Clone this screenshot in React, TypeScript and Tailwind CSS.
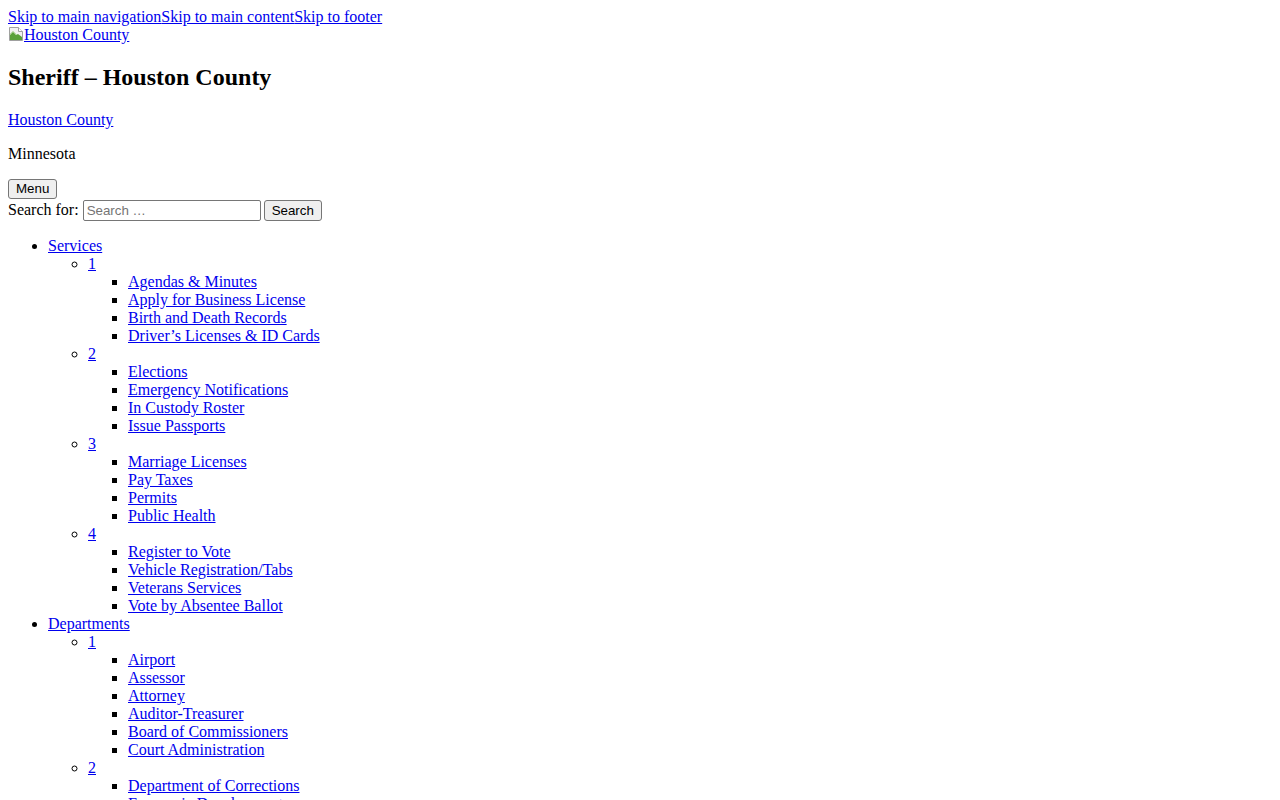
import React from 'react';

// Site header + mega-menu rendered with plain document styles (no theme loaded)
const services: string[][] = [
  ['Agendas & Minutes', 'Apply for Business License', 'Birth and Death Records', 'Driver’s Licenses & ID Cards'],
  ['Elections', 'Emergency Notifications', 'In Custody Roster', 'Issue Passports'],
  ['Marriage Licenses', 'Pay Taxes', 'Permits', 'Public Health'],
  ['Register to Vote', 'Vehicle Registration/Tabs', 'Veterans Services', 'Vote by Absentee Ballot'],
];

const departments: string[][] = [
  ['Airport', 'Assessor', 'Attorney', 'Auditor-Treasurer', 'Board of Commissioners', 'Court Administration'],
  ['Department of Corrections', 'Economic Development', 'Emergency Management', 'Environmental Services', 'Extension', 'Highway'],
  ['Human Resources', 'Human Services', 'Information Technology', 'Land Records', 'Planning & Zoning', 'Public Health'],
];

const link = 'text-[#0000ee] underline';

const BrokenImage = () => (
  <svg width="16" height="16" viewBox="0 0 16 16" className="inline-block align-[-2px]">
    <path d="M1.5 1.5h9l4 4v9h-13z" fill="#f2f2f2" stroke="#a0a0a0" />
    <path d="M10.5 1.5v4h4" fill="#ffffff" stroke="#a0a0a0" />
    <path d="M2 14V9l3-3 3 3 2-1 4 3v3z" fill="#5aa13a" />
    <path d="M2 8.5l3-3 3 3" fill="none" stroke="#8bc56a" />
  </svg>
);

const MenuSection = ({ title, groups }: { title: string; groups: string[][] }) => (
  <li className="list-item">
    <a href="#" className={link}>{title}</a>
    <ul className="list-[circle] pl-10">
      {groups.map((items, i) => (
        <li key={i}>
          <a href="#" className={link}>{i + 1}</a>
          <ul className="list-[square] pl-10">
            {items.map(item => (
              <li key={item}>
                <a href="#" className={link}>{item}</a>
              </li>
            ))}
          </ul>
        </li>
      ))}
    </ul>
  </li>
);

const btn =
  "font-['Liberation_Sans',Arial,sans-serif] text-[13.333px] leading-[normal] text-black bg-[#efefef] border border-[#767676] rounded-[3px] py-[1px] px-[7px]";

export default function App() {
  return (
    <div className="min-h-screen bg-white p-2 font-['Liberation_Serif','Times_New_Roman',serif] text-[16px] leading-[normal] text-black">
      <div>
        <a href="#" className={link}>Skip to main navigation</a>
        <a href="#" className={link}>Skip to main content</a>
        <a href="#" className={link}>Skip to footer</a>
      </div>

      <div>
        <a href="#" className={link}>
          <BrokenImage />Houston County
        </a>
      </div>

      <h2 className="my-[19.92px] text-[24px] font-bold">Sheriff – Houston County</h2>
      <p className="my-4">
        <a href="#" className={link}>Houston County</a>
      </p>
      <p className="my-4">Minnesota</p>

      <button className={`${btn} h-[20px]`}>Menu</button>
      <form className="block pt-px" onSubmit={e => e.preventDefault()}>
        <label>Search for: </label>{' '}
        <input
          type="search"
          placeholder="Search …"
          className="w-[178px] h-[21px] border border-[#767676] rounded-[2px] px-[3px] align-baseline font-['Liberation_Sans',Arial,sans-serif] text-[13.333px] placeholder:text-[#757575]"
        />{' '}
        <button type="submit" className={`${btn} h-[21px] -ml-px`}>Search</button>
      </form>

      <ul className="list-disc pl-10 my-4">
        <MenuSection title="Services" groups={services} />
        <MenuSection title="Departments" groups={departments} />
      </ul>
    </div>
  );
}
